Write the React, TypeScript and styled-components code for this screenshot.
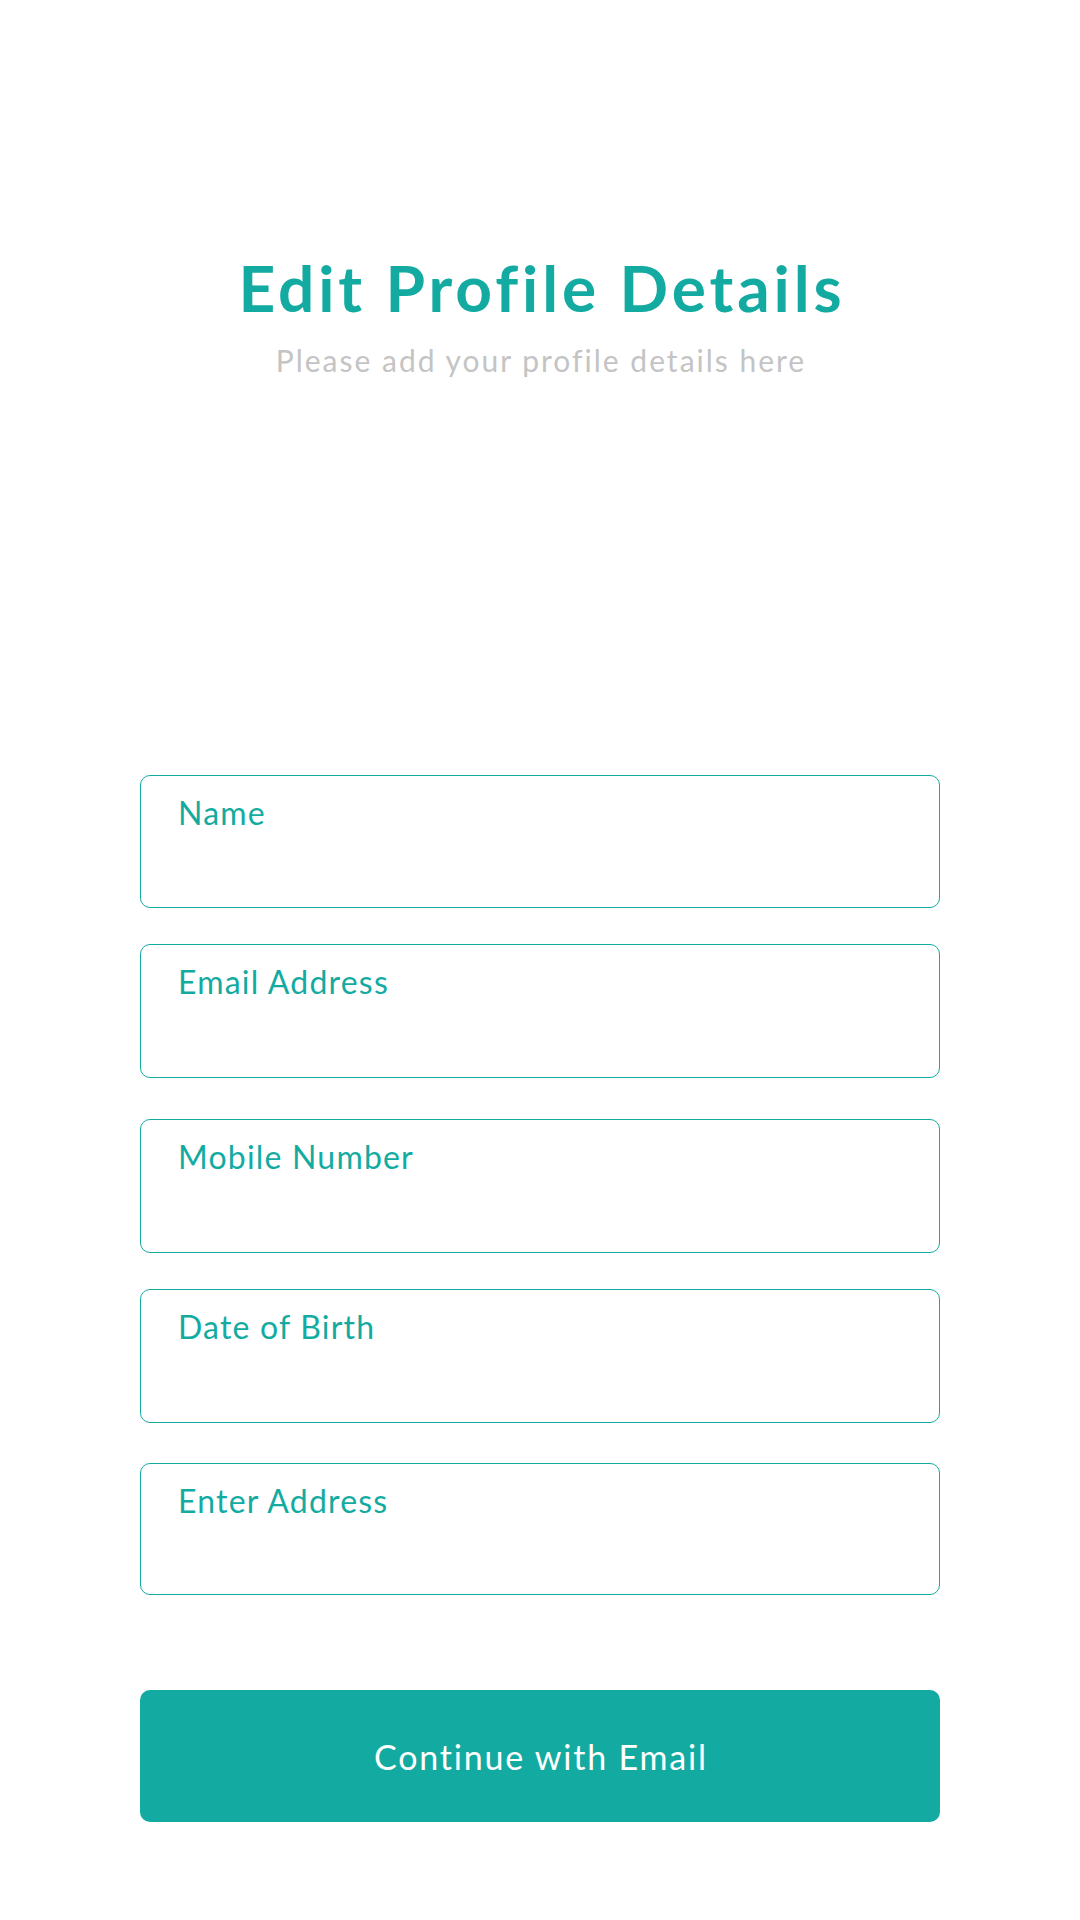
import React from "react";
import styled, { createGlobalStyle } from "styled-components";

const Global = createGlobalStyle`
  html, body { margin: 0; padding: 0; background: #ffffff; }
  body { font-family: Lato, "Noto Sans", sans-serif; }
  * { box-sizing: border-box; }
`;

const TEAL = "#13aba1";

const Page = styled.div`
  width: 1080px;
  min-height: 1920px;
  background: #ffffff;
  padding: 249px 140px 0;
  display: flex;
  flex-direction: column;
`;

const Header = styled.header`
  display: flex;
  flex-direction: column;
  align-items: center;
  gap: 16px;
`;

const Title = styled.h1`
  margin: 0;
  font-family: Lato, sans-serif;
  font-weight: 700;
  font-size: 64px;
  line-height: 77px;
  color: ${TEAL};
  letter-spacing: 3.9px;
  padding-left: 3.9px;
`;

const Subtitle = styled.p`
  margin: 0;
  font-family: Lato, sans-serif;
  font-weight: 400;
  font-size: 30px;
  line-height: 36px;
  color: #c4c4c4;
  letter-spacing: 2px;
  padding-left: 2px;
`;

const Form = styled.form`
  display: flex;
  flex-direction: column;
  margin-top: 397px;
`;

const Field = styled.label<{ $gap: number; $h: number }>`
  display: block;
  margin-top: ${(p) => p.$gap}px;
  height: ${(p) => p.$h}px;
  border: 1px solid ${TEAL};
  border-radius: 10px;
  padding: 18px 37px 0;
  cursor: text;
`;

const Label = styled.span`
  display: block;
  font-family: Lato, sans-serif;
  font-size: 32px;
  line-height: 38px;
  letter-spacing: 1.2px;
  color: ${TEAL};
`;

const Button = styled.button`
  margin-top: 95px;
  height: 132px;
  width: 100%;
  border: none;
  border-radius: 10px;
  background: ${TEAL};
  color: #ffffff;
  font-family: Lato, sans-serif;
  font-size: 34px;
  font-weight: 400;
  letter-spacing: 1.8px;
  padding: 0 0 0 1.8px;
  cursor: pointer;
`;

const fields = [
  { label: "Name", gap: 0, h: 133 },
  { label: "Email Address", gap: 36, h: 134 },
  { label: "Mobile Number", gap: 41, h: 134 },
  { label: "Date of Birth", gap: 36, h: 134 },
  { label: "Enter Address", gap: 40, h: 132 },
];

export default function App() {
  return (
    <>
      <Global />
      <Page>
        <Header>
          <Title>Edit Profile Details</Title>
          <Subtitle>Please add your profile details here</Subtitle>
        </Header>
        <Form onSubmit={(e) => e.preventDefault()}>
          {fields.map((f) => (
            <Field key={f.label} $gap={f.gap} $h={f.h}>
              <Label>{f.label}</Label>
            </Field>
          ))}
          <Button type="submit">Continue with Email</Button>
        </Form>
      </Page>
    </>
  );
}
